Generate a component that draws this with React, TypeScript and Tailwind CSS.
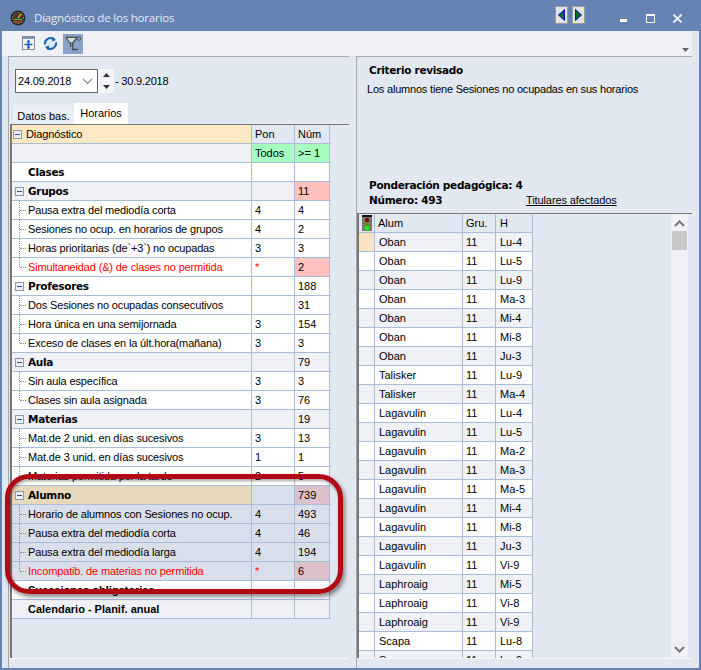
const rows: { t: string; kind?: "group" | "bold" | "tight" | "red"; p?: string; n?: string; alum?: boolean; last?: boolean; hot?: boolean; alt?: boolean }[] = [
  { t: "Clases", kind: "bold" },
  { t: "Grupos", kind: "group", n: "11", hot: true, alt: true },
  { t: "Pausa extra del mediodía corta", p: "4", n: "4" },
  { t: "Sesiones no ocup. en horarios de grupos", p: "4", n: "2" },
  { t: "Horas prioritarias (de`+3`) no ocupadas", p: "3", n: "3" },
  { t: "Simultaneidad (&) de clases no permitida", kind: "red", p: "*", n: "2", hot: true, last: true },
  { t: "Profesores", kind: "group", n: "188" },
  { t: "Dos Sesiones no ocupadas consecutivos", n: "31" },
  { t: "Hora única en una semijornada", p: "3", n: "154" },
  { t: "Exceso de clases en la últ.hora(mañana)", p: "3", n: "3", last: true },
  { t: "Aula", kind: "group", n: "79", alt: true },
  { t: "Sin aula específica", p: "3", n: "3" },
  { t: "Clases sin aula asignada", p: "3", n: "76", last: true },
  { t: "Materias", kind: "group", n: "19", alt: true },
  { t: "Mat.de 2 unid. en días sucesivos", p: "3", n: "13" },
  { t: "Mat.de 3 unid. en días sucesivos", p: "1", n: "1" },
  { t: "Materias permitida por la tarde", p: "2", n: "5", last: true },
  { t: "Alumno", kind: "group", n: "739", hot: true, alum: true },
  { t: "Horario de alumnos con Sesiones no ocup.", p: "4", n: "493", alum: true },
  { t: "Pausa extra del mediodía corta", p: "4", n: "46", alum: true },
  { t: "Pausa extra del mediodía larga", p: "4", n: "194", alum: true },
  { t: "Incompatib. de materias no permitida", kind: "red", p: "*", n: "6", hot: true, alum: true, last: true },
  { t: "Sucesiones obligatorias", kind: "tight" },
  { t: "Calendario - Planif. anual", kind: "tight", alt: true },
];

const students: [string, string][] = [
  ["Oban", "Lu-4"], ["Oban", "Lu-5"], ["Oban", "Lu-9"], ["Oban", "Ma-3"], ["Oban", "Mi-4"], ["Oban", "Mi-8"], ["Oban", "Ju-3"],
  ["Talisker", "Lu-9"], ["Talisker", "Ma-4"],
  ["Lagavulin", "Lu-4"], ["Lagavulin", "Lu-5"], ["Lagavulin", "Ma-2"], ["Lagavulin", "Ma-3"], ["Lagavulin", "Ma-5"], ["Lagavulin", "Mi-4"], ["Lagavulin", "Mi-8"], ["Lagavulin", "Ju-3"], ["Lagavulin", "Vi-9"],
  ["Laphroaig", "Mi-5"], ["Laphroaig", "Vi-8"], ["Laphroaig", "Vi-9"],
  ["Scapa", "Lu-8"], ["Scapa", "Lu-9"],
];

const Minus = () => (
  <span className="absolute left-[3px] top-[5px] flex h-[9px] w-[9px] items-center justify-center border border-[#8b97aa] bg-[#eef0f6]">
    <span className="h-px w-[5px] bg-[#2f4f8f]" />
  </span>
);

const Chevron = ({ up, thin }: { up?: boolean; thin?: boolean }) => (
  <svg width="11" height="7" viewBox="0 0 11 7" fill="none" stroke={thin ? "#8a8a8a" : "#777"} strokeWidth={thin ? 1.2 : 2}>
    <path d={up ? "M1 6l4.5-4.5L10 6" : "M1 1l4.5 4.5L10 1"} />
  </svg>
);

const GridRow = ({ r }: { r: (typeof rows)[number] }) => {
  const base = r.alum ? "bg-[#d8dfeb]" : r.alt ? "bg-[#eff1f7]" : "bg-white";
  const first = r.alum && r.kind === "group" ? "bg-[#e8d8bb]" : base;
  const bold = r.kind === "group" || r.kind === "bold" || r.kind === "tight";
  const hot = r.hot ? (r.alum ? "bg-[#dcc0cb]" : "bg-[#ffc0c0]") : base;
  const label =
    r.kind === "tight"
      ? "font-bold text-black"
      : bold
        ? "font-['DejaVu_Sans'] text-[10.5px] font-bold tracking-[-0.3px] text-black"
        : r.kind === "red"
          ? "tracking-[-0.15px] text-[#ff0000]"
          : "tracking-[-0.15px] text-black";
  return (
    <div className="flex h-[19px] border-b border-[#a9bdd8] leading-[18px]">
      <div className={`relative w-[240px] shrink-0 border-r border-[#a9bdd8] ${first}`}>
        {r.kind === "group" && <Minus />}
        {!bold && (
          <>
            <span className={`absolute left-[7px] top-0 border-l border-dotted border-[#8d8d8d] ${r.last ? "h-[9px]" : "h-[19px]"}`} />
            <span className="absolute left-[8px] top-[9px] w-[6px] border-t border-dotted border-[#8d8d8d]" />
          </>
        )}
        <span className={`absolute left-[16px] top-0 whitespace-nowrap ${label}`}>{r.t}</span>
      </div>
      <div className={`w-[43px] shrink-0 border-r border-[#a9bdd8] pl-[3px] ${base} ${r.p === "*" ? "text-[#ff0000]" : ""}`}>{r.p}</div>
      <div className={`w-[35px] shrink-0 border-r border-[#a9bdd8] pl-[3px] ${hot}`}>{r.n}</div>
    </div>
  );
};

export default function App() {
  return (
    <div className="relative flex h-[670px] w-[701px] flex-col overflow-hidden border-x-2 border-b-2 border-[#6583b3] bg-[#e2e8f1] font-['Liberation_Sans',sans-serif] text-[11px] text-black">
      {/* title bar */}
      <div className="flex h-[31px] shrink-0 items-center bg-[#6583b3] pl-[8px] pr-[17px] pt-[5px] text-white">
        <svg width="16" height="16" viewBox="0 0 16 16">
          <circle cx="8" cy="8" r="7.5" fill="#2a2622" />
          <circle cx="8" cy="8" r="5.5" fill="#4a3a2a" stroke="#c8a060" strokeWidth="1" strokeDasharray="1 1.5" />
          <path d="M8 8l3-4" stroke="#f0d040" strokeWidth="1.2" />
          <path d="M4 9.5h8" stroke="#60b040" strokeWidth="1" />
          <path d="M3 12h10" stroke="#d05030" strokeWidth="1" />
        </svg>
        <span className="ml-[8px] flex-1 font-['Open_Sans',sans-serif] text-[11.5px] tracking-[-0.2px] text-[#e6ecf5]">Diagnóstico de los horarios</span>
        <div className="mb-[7px] flex gap-[4px]">
          <div className="flex h-[18px] w-[13px] items-center justify-center border border-[#9a9a9a] bg-[#e4e4e4]">
            <svg width="7" height="12" viewBox="0 0 7 12"><path d="M6.5 0.5v11L0.5 6z" fill="#0a6a1a" stroke="#0000ff" strokeWidth="1" /></svg>
          </div>
          <div className="flex h-[18px] w-[13px] items-center justify-center border border-[#9a9a9a] bg-[#e4e4e4]">
            <svg width="7" height="12" viewBox="0 0 7 12"><path d="M0.5 0.5v11L6.5 6z" fill="#0a6a1a" stroke="#0000ff" strokeWidth="1" /></svg>
          </div>
        </div>
        <div className="ml-[35px] flex items-center">
          <span className="mt-[4px] h-[3px] w-[7px] bg-white" />
          <span className="ml-[19px] h-[9px] w-[9px] border border-t-2 border-white" />
          <svg className="ml-[18px]" width="9" height="9" viewBox="0 0 9 9" stroke="white" strokeWidth="1.6"><path d="M0.5 0.5l8 8M8.5 0.5l-8 8" /></svg>
        </div>
      </div>

      {/* toolbar */}
      <div className="mr-[7px] flex h-[25px] shrink-0 items-center bg-[#eff1f7] pl-[20px]">
        <svg width="14" height="15" viewBox="0 0 14 15">
          <rect x="0.5" y="0.5" width="12" height="13" fill="#f4f4f4" stroke="#8a8a8a" />
          <rect x="1" y="1" width="11" height="2" fill="#7a9ac8" />
          <path d="M6.5 4v9M2.5 8.5h8" stroke="#1060c0" strokeWidth="1.4" />
          <path d="M4.5 6.5l2-2.5 2 2.5M4.5 10.5l2 2.5 2-2.5" fill="#1060c0" />
        </svg>
        <svg className="ml-[7px]" width="15" height="15" viewBox="0 0 15 15" fill="none">
          <circle cx="7.5" cy="7.5" r="6.5" fill="#dce8f6" />
          <path d="M2 8.5a5.5 5.5 0 019-5M13 6.5a5.5 5.5 0 01-9 5" stroke="#1a62b4" strokeWidth="2" />
          <path d="M9.5 0.5l3.5 3.5-4 1.5zM5.5 14.5L2 11l4-1.5z" fill="#1a62b4" />
        </svg>
        <div className="ml-[5px] flex h-[20px] w-[20px] items-center justify-center bg-[#8aa2c8]">
          <svg width="17" height="16" viewBox="0 0 17 16" fill="none">
            <path d="M1 1.5h11L7.8 7v6.5h5" stroke="#4a4a4a" strokeWidth="1.3" />
            <path d="M1 1.5L5.5 7v4" stroke="#4a4a4a" strokeWidth="1.3" />
            <path d="M2 2h9L7 6H5z" fill="#d8d8d8" />
            <circle cx="14" cy="2.5" r="1.8" stroke="#555" />
          </svg>
        </div>
        <svg className="ml-auto mr-[3px] mt-[12px]" width="7" height="4" viewBox="0 0 7 4"><path d="M0 0h7L3.5 4z" fill="#666" /></svg>
      </div>

      <div className="flex min-h-0 flex-1 pl-[6px]">
        {/* left panel */}
        <div className="flex w-[341px] shrink-0 flex-col border-l border-t border-[#a8a8a8] pb-[2px]">
          <div className="flex items-start pl-[6px] pt-[12px]">
            <div className="flex h-[24px] w-[83px] items-center justify-between border border-[#666] bg-white pl-[2px] pr-[4px] tracking-[-0.2px]">
              <span>24.09.2018</span>
              <Chevron thin />
            </div>
            <div className="flex h-[24px] w-[16px] flex-col items-center justify-around bg-[#f4f5f9]">
              <svg width="7" height="4" viewBox="0 0 7 4"><path d="M0 4h7L3.5 0z" fill="#333" /></svg>
              <svg width="7" height="4" viewBox="0 0 7 4"><path d="M0 0h7L3.5 4z" fill="#333" /></svg>
            </div>
            <span className="ml-[1px] leading-[24px] tracking-[-0.2px]">- 30.9.2018</span>
          </div>
          <div className="mt-[10px] flex items-end pl-[4px]">
            <div className="flex h-[19px] w-[61px] items-center justify-center bg-[#e9edf4] pt-[3px]">Datos bas.</div>
            <div className="flex h-[21px] w-[54px] items-center justify-center bg-white">Horarios</div>
          </div>
          <div className="ml-px min-h-0 flex-1 border-l-2 border-t border-[#777]">
            <div className="w-[319px]">
              <div className="flex h-[19px] border-b border-[#a9bdd8] leading-[18px]">
                <div className="relative w-[240px] shrink-0 border-r border-[#a9bdd8] bg-[#ffe8c4]">
                  <span className="absolute left-[1px] top-[5px] flex h-[9px] w-[9px] items-center justify-center border border-[#8b97aa] bg-[#eef0f6]">
                    <span className="h-px w-[5px] bg-[#2f4f8f]" />
                  </span>
                  <span className="absolute left-[14px] top-0 tracking-[-0.1px]">Diagnóstico</span>
                </div>
                <div className="w-[43px] shrink-0 border-r border-[#a9bdd8] bg-[#e2e8f1] pl-[3px]">Pon</div>
                <div className="w-[35px] shrink-0 border-r border-[#a9bdd8] bg-[#e2e8f1] pl-[3px]">Núm</div>
              </div>
              <div className="flex h-[19px] border-b border-[#a9bdd8] leading-[18px]">
                <div className="w-[240px] shrink-0 border-r border-[#a9bdd8] bg-[#eff1f7]" />
                <div className="w-[43px] shrink-0 border-r border-[#a9bdd8] bg-[#a6ffc0] pl-[3px]">Todos</div>
                <div className="w-[35px] shrink-0 border-r border-[#a9bdd8] bg-[#a6ffc0] pl-[3px]">&gt;= 1</div>
              </div>
              {rows.map((r, i) => (
                <GridRow key={i} r={r} />
              ))}
            </div>
          </div>
          <div className="h-[8px] shrink-0 border-t border-[#f8f9fb]" />
        </div>

        {/* right panel */}
        <div className="ml-[7px] flex w-[336px] shrink-0 flex-col border-l border-t border-[#a8a8a8]">
          <div className="relative h-[156px] shrink-0">
            <div className="pl-[12px] pt-[6px] font-['DejaVu_Sans',sans-serif] text-[10.5px] font-bold tracking-[-0.3px] text-black">Criterio revisado</div>
            <div className="pl-[10px] pt-[2px] tracking-[-0.2px]">Los alumnos tiene Sesiones no ocupadas en sus horarios</div>
            <div className="absolute bottom-[5px] left-[12px] right-0 font-['DejaVu_Sans',sans-serif] text-[10.5px] font-bold leading-[15px] tracking-[-0.3px] text-black">
              <div>Ponderación pedagógica: 4</div>
              <div>Número: 493</div>
              <span className="absolute bottom-0 left-[157px] font-['Liberation_Sans',sans-serif] text-[11px] font-normal tracking-[-0.1px] underline">Titulares afectados</span>
            </div>
          </div>
          <div className="flex h-[445px] min-h-0 shrink-0 border-l-2 border-t border-[#777] pr-[4px]">
            <div className="h-full w-[174px] shrink-0 overflow-hidden">
              <div className="flex h-[19px] border-b border-[#a9bdd8] leading-[18px]">
                <div className="flex w-[16px] shrink-0 items-center justify-center border-r border-[#a9bdd8]">
                  <svg width="10" height="16" viewBox="0 0 10 16">
                    <rect width="10" height="16" fill="#7a7a6a" />
                    <rect width="10" height="2" fill="#111" />
                    <circle cx="5" cy="5" r="2.2" fill="#7a1010" />
                    <circle cx="5" cy="9" r="2" fill="#6a7a20" />
                    <circle cx="5" cy="13" r="2.5" fill="#20e020" />
                  </svg>
                </div>
                <div className="w-[88px] shrink-0 border-r border-[#a9bdd8] pl-[3px]">Alum</div>
                <div className="w-[33px] shrink-0 border-r border-[#a9bdd8] pl-[3px]">Gru.</div>
                <div className="w-[37px] shrink-0 border-r border-[#a9bdd8] pl-[4px]">H</div>
              </div>
              {students.map(([name, h], i) => {
                const bg = i % 2 ? "bg-white" : "bg-[#eff1f7]";
                return (
                  <div key={i} className="flex h-[19px] border-b border-[#a9bdd8] leading-[18px]">
                    <div className={`w-[16px] shrink-0 border-r border-[#a9bdd8] ${i === 0 ? "bg-[#fbe3c3]" : bg}`} />
                    <div className={`w-[88px] shrink-0 border-r border-[#a9bdd8] pl-[4px] ${bg}`}>{name}</div>
                    <div className={`w-[33px] shrink-0 border-r border-[#a9bdd8] pl-[3px] ${bg}`}>11</div>
                    <div className={`w-[37px] shrink-0 border-r border-[#a9bdd8] pl-[4px] ${bg}`}>{h}</div>
                  </div>
                );
              })}
            </div>
            {/* scrollbar */}
            <div className="ml-auto flex w-[17px] shrink-0 flex-col items-center justify-between bg-[#eff1f7] pb-[5px] pt-[6px]">
              <div className="flex w-full flex-col items-center">
                <Chevron up />
                <div className="mt-[4px] h-[19px] w-[15px] bg-[#c8c8c8]" />
              </div>
              <Chevron />
            </div>
          </div>
          <div className="h-[2px] shrink-0 border-t border-[#f8f9fb]" />
        </div>
      </div>

      {/* callout */}
      <div className="absolute left-[3px] top-[474px] h-[120px] w-[338px] rounded-[24px] border-[5px] border-[#b20a14] shadow-[2px_3px_4px_rgba(0,0,0,0.45),inset_1px_2px_3px_rgba(0,0,0,0.35)]" />
    </div>
  );
}
